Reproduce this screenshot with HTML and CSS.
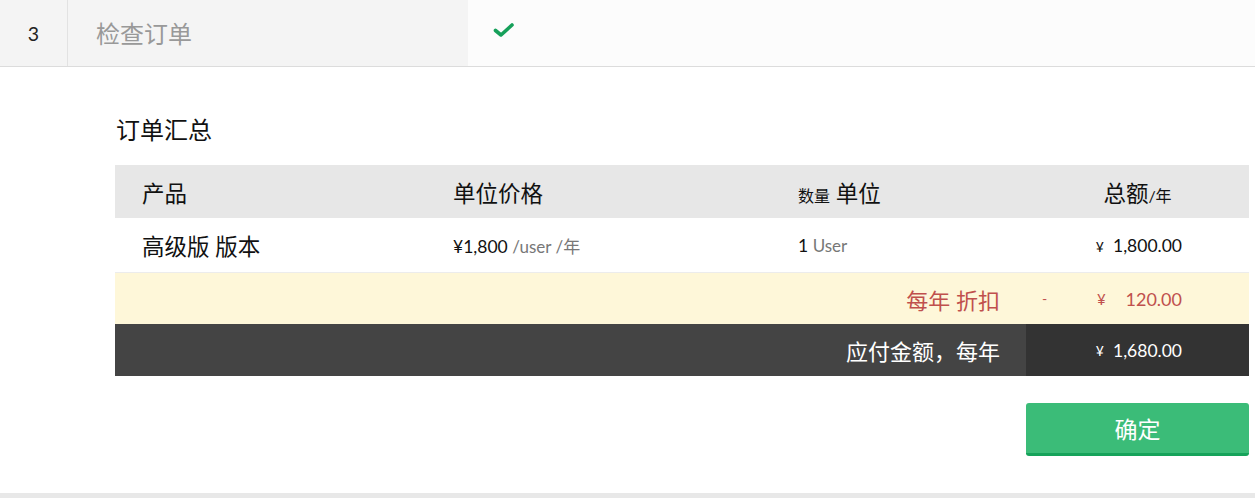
FILE: index.html
```html
<!DOCTYPE html>
<html lang="zh-CN">
<head>
<meta charset="utf-8">
<link rel="stylesheet" href="styles.css">
</head>
<body>
<div class="page">
  <div class="stepbar">
    <div class="step-num">3</div>
    <div class="step-title">检查订单</div>
    <div class="step-status">
      <svg width="22" height="16" viewBox="0 0 22 16"><path d="M2.5 8.5 L8 13 L19 3" fill="none" stroke="#16a05a" stroke-width="3.6" stroke-linecap="round" stroke-linejoin="round"/></svg>
    </div>
  </div>
  <div class="content">
    <h2 class="summary-title">订单汇总</h2>
    <div class="order">
      <div class="row head">
        <div class="cell">产品</div>
        <div class="cell">单位价格</div>
        <div class="cell"><span class="small">数量</span> 单位</div>
        <div class="cell center">总额<span class="small">/年</span></div>
      </div>
      <div class="row body">
        <div class="cell big">高级版 版本</div>
        <div class="cell">¥1,800 <span class="muted">/user /年</span></div>
        <div class="cell">1 <span class="muted">User</span></div>
        <div class="cell amount"><span class="yen">¥</span>1,800.00</div>
      </div>
      <div class="row discount">
        <div class="label">每年 折扣</div>
        <div class="value"><span class="minus">-</span><span class="yen-d">¥</span><span>120.00</span></div>
      </div>
      <div class="row total">
        <div class="label">应付金额，每年</div>
        <div class="value amount"><span class="yen">¥</span>1,680.00</div>
      </div>
    </div>
    <div class="actions">
      <button class="confirm">确定</button>
    </div>
  </div>
  <div class="bottom-band"></div>
</div>
</body>
</html>
```

FILE: styles.css
```css
html, body {
  margin: 0;
  padding: 0;
  background: #fff;
}
body {
  font-family: "Lato", "Noto Sans CJK SC", sans-serif;
  color: #111;
  width: 1255px;
  height: 498px;
  overflow: hidden;
}
.page {
  display: flex;
  flex-direction: column;
  height: 498px;
}
.stepbar {
  display: flex;
  height: 66px;
  border-bottom: 1px solid #dcdcdc;
  background: #fcfcfc;
}
.step-num {
  width: 67px;
  background: #f4f4f4;
  border-right: 1px solid #e2e2e2;
  display: flex;
  align-items: center;
  justify-content: center;
  font-size: 19.5px;
  color: #222;
}
.step-title {
  width: 372px;
  background: #f4f4f4;
  padding-left: 28px;
  display: flex;
  align-items: center;
  font-size: 24px;
  color: #999;
  padding-bottom: 1px;
}
.step-status {
  display: flex;
  align-items: center;
  padding-left: 25px;
  padding-bottom: 6px;
}
.content {
  flex: 1;
  padding: 0 6px 0 115px;
}
.summary-title {
  margin: 47px 0 0 1px;
  font-size: 24px;
  font-weight: normal;
  line-height: 32px;
  color: #111;
  height: 51px;
}
.order {
  display: flex;
  flex-direction: column;
}
.row {
  display: grid;
  grid-template-columns: 311px 345px 255px 1fr;
  align-items: center;
}
.row.head {
  height: 53px;
  background: #e7e7e7;
  font-size: 22.5px;
}
.row .cell {
  padding-left: 27px;
}
.row .cell.center {
  padding-left: 0;
  text-align: center;
}
.small {
  font-size: 16px;
}
.row.body {
  height: 54px;
  border-bottom: 1px solid #ececec;
  font-size: 17.5px;
}
.big {
  font-size: 22.5px;
}
.muted {
  color: #777;
  font-size: 17px;
}
.amount {
  text-align: right;
  padding-right: 67px;
  font-size: 17.5px;
}
.yen {
  font-size: 14px;
  margin-right: 9px;
}
.row.discount, .row.total {
  grid-template-columns: 911px 1fr;
  height: 52px;
}
.row.discount {
  background: #fef7d9;
  color: #c0504d;
  height: 51px;
}
.row .label {
  text-align: right;
  padding-right: 26px;
  font-size: 22px;
}
.discount .value {
  display: flex;
  align-items: center;
  font-size: 18px;
  padding-right: 67px;
  height: 100%;
}
.minus {
  margin-left: 16px;
  width: 55px;
  font-size: 14px;
}
.yen-d {
  font-size: 15px;
  flex: 1;
}
.row.total {
  background: #444;
  color: #fff;
}
.total .value {
  background: #333;
  height: 100%;
  display: flex;
  align-items: center;
  justify-content: flex-end;
}
.total .yen {
  margin-right: 9px;
}
.actions {
  display: flex;
  justify-content: flex-end;
  margin-top: 27px;
}
.confirm {
  width: 223px;
  height: 53px;
  background: #3bbc78;
  border: none;
  border-bottom: 3px solid #16a35a;
  border-radius: 3px;
  color: #fff;
  font-family: "Lato", "Noto Sans CJK SC", sans-serif;
  font-size: 23px;
  padding: 0;
}
.bottom-band {
  margin-top: auto;
  height: 5px;
  background: #e8e8e8;
}
```
